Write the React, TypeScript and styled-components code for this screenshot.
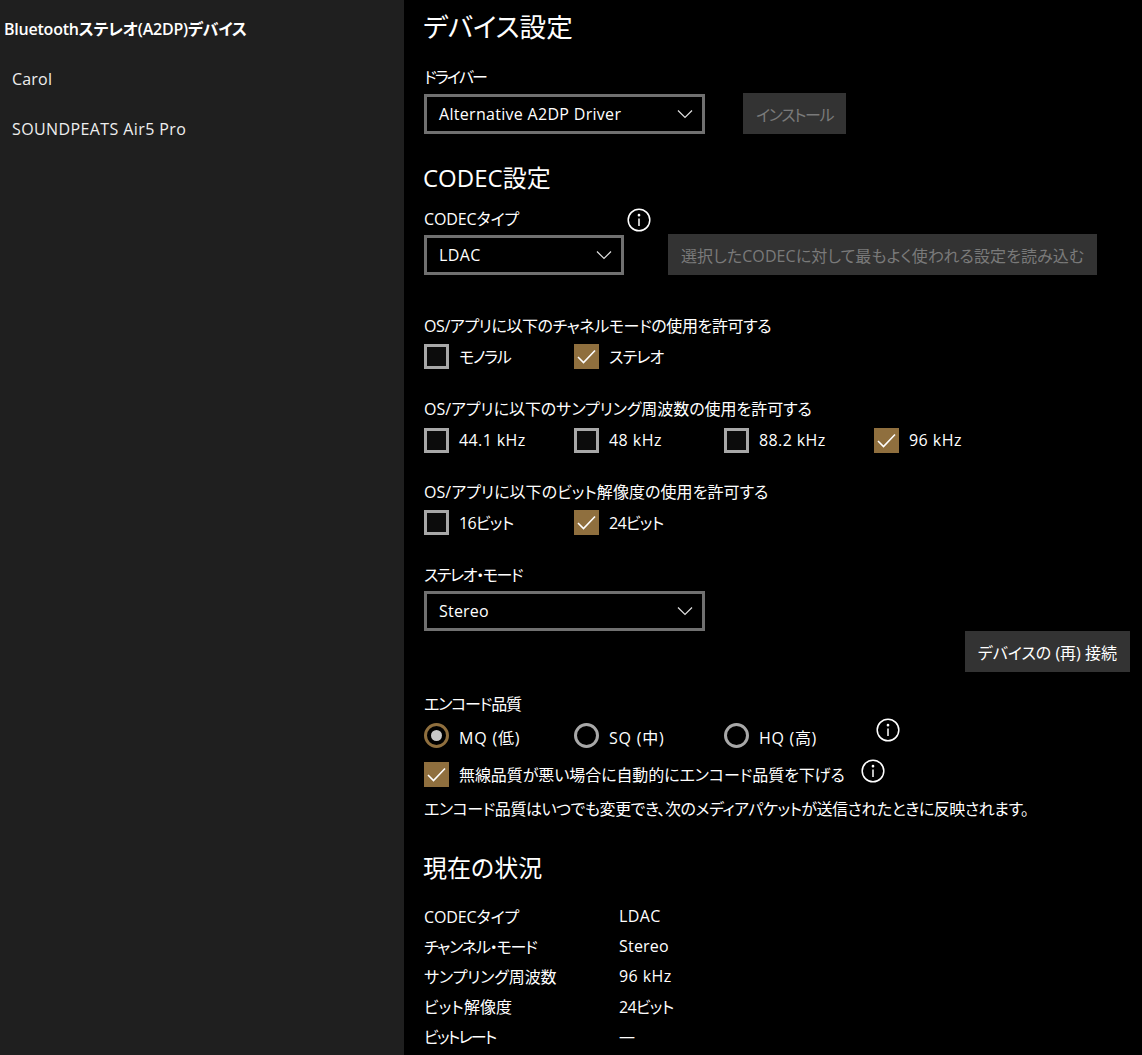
import { Fragment } from "react";
import styled, { createGlobalStyle } from "styled-components";

const GlobalStyle = createGlobalStyle`
  html, body {
    margin: 0;
    padding: 0;
    background: #000;
  }
  body {
    font-family: "Open Sans", "Noto Sans CJK JP", sans-serif;
    font-feature-settings: "palt";
    font-size: 16px;
    color: #fff;
  }
`;

const Page = styled.div`
  display: flex;
  width: 1142px;
  height: 1055px;
  overflow: hidden;
`;

const Sidebar = styled.nav`
  flex: 0 0 404px;
  background: #1f1f1f;
  padding-top: 4px;
  box-sizing: border-box;
`;

const NavItem = styled.div<{ $active?: boolean }>`
  height: 50px;
  line-height: 50px;
  padding-left: ${(p) => (p.$active ? "4px" : "12px")};
  font-weight: ${(p) => (p.$active ? 600 : 400)};
  color: ${(p) => (p.$active ? "#fff" : "#eee")};
`;

const Text = styled.span<{ $ls?: number }>`
  letter-spacing: ${(p) => p.$ls ?? 0}px;
`;

const Main = styled.main`
  flex: 1;
  padding: 0 12px 0 20px;
`;

const Title = styled.h1`
  margin: 0 0 0 -1px;
  font-size: 26.6px;
  font-weight: 400;
  line-height: 54px;
`;

const Heading = styled.h2<{ $top: number }>`
  margin: ${(p) => p.$top}px 0 0 -1px;
  font-size: 24px;
  font-weight: 400;
  line-height: 30px;
`;

const Label = styled.div<{ $top: number }>`
  margin-top: ${(p) => p.$top}px;
  height: 20px;
  line-height: 20px;
  white-space: nowrap;
`;

const LabelRow = styled.div<{ $top: number }>`
  display: flex;
  margin-top: ${(p) => p.$top}px;
  height: 20px;
  line-height: 20px;
`;

const LabelCell = styled.div`
  width: 203px;
`;

const ControlRow = styled.div<{ $gap: number; $top?: number }>`
  display: flex;
  align-items: center;
  gap: ${(p) => p.$gap}px;
  margin-top: ${(p) => p.$top ?? 6}px;
  height: 41px;
`;

const Select = styled.div<{ $width: number }>`
  display: flex;
  align-items: center;
  justify-content: space-between;
  box-sizing: border-box;
  width: ${(p) => p.$width}px;
  height: 40px;
  padding: 1px 9px 0 12px;
  border: 3px solid #707070;
  background: #000;
`;

const Button = styled.div<{ $disabled?: boolean }>`
  display: flex;
  align-items: center;
  height: 41px;
  padding: 0 13px;
  background: #333;
  color: ${(p) => (p.$disabled ? "#7a7a7a" : "#fff")};
  white-space: nowrap;
`;

const OptionRow = styled.div<{ $top: number }>`
  display: flex;
  margin-top: ${(p) => p.$top}px;
  height: 26px;
`;

const Option = styled.div<{ $auto?: boolean; $drop?: number }>`
  display: flex;
  align-items: center;
  gap: 10px;
  width: ${(p) => (p.$auto ? "auto" : "150px")};
  white-space: nowrap;
  ${Text} {
    padding-top: ${(p) => p.$drop ?? 0}px;
  }
`;

const Box = styled.span<{ $checked?: boolean }>`
  display: flex;
  align-items: center;
  justify-content: center;
  box-sizing: border-box;
  flex: none;
  width: 25px;
  height: 25px;
  border: 3px solid ${(p) => (p.$checked ? "#8f6f3e" : "#a8a8a8")};
  background: ${(p) => (p.$checked ? "#8f6f3e" : "#0c0c0c")};
`;

const Radio = styled.span<{ $checked?: boolean }>`
  display: flex;
  align-items: center;
  justify-content: center;
  box-sizing: border-box;
  flex: none;
  width: 25px;
  height: 25px;
  border-radius: 50%;
  border: 3px solid ${(p) => (p.$checked ? "#8f6f3e" : "#a8a8a8")};
  &::after {
    content: "";
    display: ${(p) => (p.$checked ? "block" : "none")};
    width: 11px;
    height: 11px;
    border-radius: 50%;
    background: #c8c8c8;
  }
`;

const InfoWrap = styled.span<{ $left?: number; $top?: number }>`
  display: block;
  flex: none;
  width: 24px;
  height: 24px;
  margin-left: ${(p) => p.$left ?? 0}px;
  margin-top: ${(p) => p.$top ?? 0}px;
`;

const Right = styled.div`
  display: flex;
  justify-content: flex-end;
`;

const StatusList = styled.dl`
  display: grid;
  grid-template-columns: 195px 1fr;
  grid-auto-rows: 30px;
  align-items: center;
  margin: 18px 0 0;
`;

const StatusTerm = styled.dt`
  margin: 0;
`;

const StatusValue = styled.dd`
  margin: 0;
`;

const Chevron = () => (
  <svg width="16" height="10" viewBox="0 0 16 10" fill="none" stroke="#e0e0e0" strokeWidth="1.2">
    <path d="M1 1.5 L8 8.5 L15 1.5" />
  </svg>
);

const Check = () => (
  <svg width="19" height="15" viewBox="0 0 19 15" fill="none" stroke="#fff" strokeWidth="1.6">
    <path d="M1 8 L6.5 13.5 L18 1.5" />
  </svg>
);

const Info = ({ left, top }: { left?: number; top?: number }) => (
  <InfoWrap $left={left} $top={top}>
    <svg width="24" height="24" viewBox="0 0 24 24" fill="none" stroke="#fff" strokeWidth="1.5">
      <circle cx="12" cy="12" r="10.8" />
      <path d="M12 10.5 V18" />
      <circle cx="12" cy="7.2" r="0.6" fill="#fff" />
    </svg>
  </InfoWrap>
);

type OptionProps = { label: string; checked?: boolean; auto?: boolean; ls?: number };

const CheckOption = ({ label, checked, auto, ls }: OptionProps) => (
  <Option $auto={auto}>
    <Box $checked={checked}>{checked && <Check />}</Box>
    <Text $ls={ls}>{label}</Text>
  </Option>
);

const RadioOption = ({ label, checked, ls }: OptionProps) => (
  <Option $drop={3}>
    <Radio $checked={checked} />
    <Text $ls={ls}>{label}</Text>
  </Option>
);

const status: [string, number, string, number][] = [
  ["CODECタイプ", -0.1, "LDAC", 0.4],
  ["チャンネル・モード", -1.2, "Stereo", 0.2],
  ["サンプリング周波数", -0.1, "96 kHz", 0.4],
  ["ビット解像度", 0.1, "24ビット", -0.7],
  ["ビットレート", -1.7, "—", 0],
];

export default function App() {
  return (
    <Page>
      <GlobalStyle />
      <Sidebar>
        <NavItem $active>
          <Text $ls={-0.22}>Bluetoothステレオ(A2DP)デバイス</Text>
        </NavItem>
        <NavItem>
          <Text $ls={0.2}>Carol</Text>
        </NavItem>
        <NavItem>
          <Text $ls={0.4}>SOUNDPEATS Air5 Pro</Text>
        </NavItem>
      </Sidebar>
      <Main>
        <Title>デバイス設定</Title>
        <Label $top={13}>
          <Text $ls={-1.8}>ドライバー</Text>
        </Label>
        <ControlRow $gap={38}>
          <Select $width={281}>
            <Text $ls={0.3}>Alternative A2DP Driver</Text>
            <Chevron />
          </Select>
          <Button $disabled>
            <Text $ls={-1.4}>インストール</Text>
          </Button>
        </ControlRow>

        <Heading $top={29}>CODEC設定</Heading>
        <LabelRow $top={16}>
          <LabelCell>
            <Text $ls={-0.1}>CODECタイプ</Text>
          </LabelCell>
          <Info top={-1} />
        </LabelRow>
        <ControlRow $gap={44} $top={5}>
          <Select $width={200}>
            <Text $ls={0.4}>LDAC</Text>
            <Chevron />
          </Select>
          <Button $disabled>
            <Text $ls={0.1}>選択したCODECに対して最もよく使われる設定を読み込む</Text>
          </Button>
        </ControlRow>

        <Label $top={41}>
          <Text $ls={-0.4}>OS/アプリに以下のチャネルモードの使用を許可する</Text>
        </Label>
        <OptionRow $top={7}>
          <CheckOption label="モノラル" ls={-1.3} />
          <CheckOption label="ステレオ" ls={-0.8} checked />
        </OptionRow>

        <Label $top={30}>
          <Text $ls={-0.04}>OS/アプリに以下のサンプリング周波数の使用を許可する</Text>
        </Label>
        <OptionRow $top={8}>
          <CheckOption label="44.1 kHz" ls={0.4} />
          <CheckOption label="48 kHz" ls={0.45} />
          <CheckOption label="88.2 kHz" ls={0.4} />
          <CheckOption label="96 kHz" ls={0.45} checked />
        </OptionRow>

        <Label $top={29}>
          <Text $ls={0.05}>OS/アプリに以下のビット解像度の使用を許可する</Text>
        </Label>
        <OptionRow $top={7}>
          <CheckOption label="16ビット" ls={-0.7} />
          <CheckOption label="24ビット" ls={-0.7} checked />
        </OptionRow>

        <Label $top={30}>
          <Text $ls={-1.4}>ステレオ・モード</Text>
        </Label>
        <ControlRow $gap={0} $top={5}>
          <Select $width={281}>
            <Text $ls={0.2}>Stereo</Text>
            <Chevron />
          </Select>
        </ControlRow>
        <Right>
          <Button>デバイスの (再) 接続</Button>
        </Right>

        <Label $top={22}>
          <Text $ls={-1.2}>エンコード品質</Text>
        </Label>
        <OptionRow $top={8}>
          <RadioOption label="MQ (低)" ls={0.8} checked />
          <RadioOption label="SQ (中)" ls={0.8} />
          <RadioOption label="HQ (高)" ls={0.7} />
          <Info left={2} top={-4} />
        </OptionRow>
        <OptionRow $top={13}>
          <CheckOption label="無線品質が悪い場合に自動的にエンコード品質を下げる" ls={-0.08} checked auto />
          <Info left={16} top={-2} />
        </OptionRow>
        <Label $top={12}>
          <Text $ls={-0.47}>エンコード品質はいつでも変更でき、次のメディアパケットが送信されたときに反映されます。</Text>
        </Label>

        <Heading $top={34}>現在の状況</Heading>
        <StatusList>
          {status.map(([term, termLs, value, valueLs]) => (
            <Fragment key={term}>
              <StatusTerm>
                <Text $ls={termLs}>{term}</Text>
              </StatusTerm>
              <StatusValue>
                <Text $ls={valueLs}>{value}</Text>
              </StatusValue>
            </Fragment>
          ))}
        </StatusList>
      </Main>
    </Page>
  );
}
